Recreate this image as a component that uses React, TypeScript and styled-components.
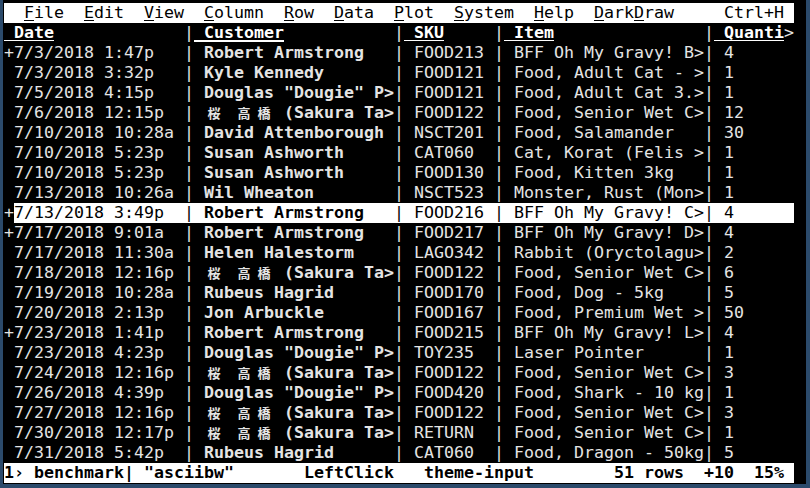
import React from "react";
import styled, { createGlobalStyle, css } from "styled-components";

const CW = 10; // terminal cell width in px
const RH = 20; // terminal row height in px

const GlobalStyle = createGlobalStyle`
  html, body { margin: 0; padding: 0; background: #2b4a6b; }
  #root { width: 810px; height: 488px; }
`;

const Frame = styled.div`
  width: 810px;
  height: 488px;
  box-sizing: border-box;
  background: #2b4a6b;
  padding: 0 4px 4px 3px;
  display: flex;
`;

const Screen = styled.div`
  flex: 1;
  background: #000;
  padding: 3px 0 0 1px;
  display: flex;
  flex-direction: column;
  font-family: "DejaVu Sans Mono", "Liberation Mono", monospace;
  font-size: 16.61px;
  line-height: ${RH}px;
  color: #e4e4e4;
  white-space: pre;
  overflow: hidden;
`;

const Line = styled.div`
  display: flex;
  height: ${RH}px;
  flex: none;
`;

const MenuBar = styled(Line)`
  width: ${79 * CW}px;
  background: #ffffff;
  color: #000;
  padding: 0 ${CW}px 0 ${2 * CW}px;
  box-sizing: border-box;
  gap: ${2 * CW}px;
`;

const MenuItem = styled.span<{ $right?: boolean }>`
  ${(p) => p.$right && css`margin-left: auto;`}
`;

const Hot = styled.span`
  text-decoration: underline;
  text-underline-offset: 2px;
`;

const Cell = styled.span<{ $w: number; $bold?: boolean }>`
  flex: none;
  width: ${(p) => p.$w * CW}px;
  overflow: hidden;
  font-weight: ${(p) => (p.$bold ? 700 : 400)};
`;

const HeadCell = styled.span<{ $w: number; $current?: boolean }>`
  flex: none;
  width: ${(p) => p.$w * CW}px;
  overflow: hidden;
  font-weight: 700;
  color: #ffffff;
  text-decoration: underline;
  text-decoration-thickness: ${(p) => (p.$current ? 2 : 1)}px;
  text-underline-offset: 2px;
`;

const Sep = styled.span`
  flex: none;
  width: ${CW}px;
`;

const RowBody = styled.div<{ $active?: boolean }>`
  display: flex;
  width: ${78 * CW}px;
  background: ${(p) => (p.$active ? "#ffffff" : "transparent")};
  color: ${(p) => (p.$active ? "#000000" : "#e4e4e4")};
`;

const Wide = styled.span`
  display: inline-block;
  width: ${2 * CW}px;
  text-align: center;
  font-family: "Noto Sans CJK JP", "Noto Sans CJK SC", sans-serif;
  font-size: 13px;
  vertical-align: top;
`;

const StatusBar = styled(Line)`
  width: ${79 * CW}px;
  background: #ffffff;
  color: #000;
  font-weight: 700;
`;

type Row = {
  mark?: boolean;
  date: string;
  cust: string;
  sku: string;
  item: string;
  qty: string;
  active?: boolean;
};

const SAKURA = "桜 高橋 (Sakura Ta>";
const DOUG = 'Douglas "Dougie" P>';

const rows: Row[] = [
  { mark: true, date: "7/3/2018 1:47p", cust: "Robert Armstrong", sku: "FOOD213", item: "BFF Oh My Gravy! B>", qty: "4" },
  { date: "7/3/2018 3:32p", cust: "Kyle Kennedy", sku: "FOOD121", item: "Food, Adult Cat - >", qty: "1" },
  { date: "7/5/2018 4:15p", cust: DOUG, sku: "FOOD121", item: "Food, Adult Cat 3.>", qty: "1" },
  { date: "7/6/2018 12:15p", cust: SAKURA, sku: "FOOD122", item: "Food, Senior Wet C>", qty: "12" },
  { date: "7/10/2018 10:28a", cust: "David Attenborough", sku: "NSCT201", item: "Food, Salamander", qty: "30" },
  { date: "7/10/2018 5:23p", cust: "Susan Ashworth", sku: "CAT060", item: "Cat, Korat (Felis >", qty: "1" },
  { date: "7/10/2018 5:23p", cust: "Susan Ashworth", sku: "FOOD130", item: "Food, Kitten 3kg", qty: "1" },
  { date: "7/13/2018 10:26a", cust: "Wil Wheaton", sku: "NSCT523", item: "Monster, Rust (Mon>", qty: "1" },
  { mark: true, active: true, date: "7/13/2018 3:49p", cust: "Robert Armstrong", sku: "FOOD216", item: "BFF Oh My Gravy! C>", qty: "4" },
  { mark: true, date: "7/17/2018 9:01a", cust: "Robert Armstrong", sku: "FOOD217", item: "BFF Oh My Gravy! D>", qty: "4" },
  { date: "7/17/2018 11:30a", cust: "Helen Halestorm", sku: "LAGO342", item: "Rabbit (Oryctolagu>", qty: "2" },
  { date: "7/18/2018 12:16p", cust: SAKURA, sku: "FOOD122", item: "Food, Senior Wet C>", qty: "6" },
  { date: "7/19/2018 10:28a", cust: "Rubeus Hagrid", sku: "FOOD170", item: "Food, Dog - 5kg", qty: "5" },
  { date: "7/20/2018 2:13p", cust: "Jon Arbuckle", sku: "FOOD167", item: "Food, Premium Wet >", qty: "50" },
  { mark: true, date: "7/23/2018 1:41p", cust: "Robert Armstrong", sku: "FOOD215", item: "BFF Oh My Gravy! L>", qty: "4" },
  { date: "7/23/2018 4:23p", cust: DOUG, sku: "TOY235", item: "Laser Pointer", qty: "1" },
  { date: "7/24/2018 12:16p", cust: SAKURA, sku: "FOOD122", item: "Food, Senior Wet C>", qty: "3" },
  { date: "7/26/2018 4:39p", cust: DOUG, sku: "FOOD420", item: "Food, Shark - 10 kg", qty: "1" },
  { date: "7/27/2018 12:16p", cust: SAKURA, sku: "FOOD122", item: "Food, Senior Wet C>", qty: "3" },
  { date: "7/30/2018 12:17p", cust: SAKURA, sku: "RETURN", item: "Food, Senior Wet C>", qty: "1" },
  { date: "7/31/2018 5:42p", cust: "Rubeus Hagrid", sku: "CAT060", item: "Food, Dragon - 50kg", qty: "5" },
];

const menus: [string, string][] = [
  ["F", "ile"],
  ["E", "dit"],
  ["V", "iew"],
  ["C", "olumn"],
  ["R", "ow"],
  ["D", "ata"],
  ["P", "lot"],
  ["S", "ystem"],
  ["H", "elp"],
];

function Term({ text }: { text: string }) {
  const parts: React.ReactNode[] = [];
  let buf = "";
  Array.from(text).forEach((ch, i) => {
    if (ch.charCodeAt(0) > 0x2e80) {
      if (buf) parts.push(buf);
      buf = "";
      parts.push(<Wide key={i}>{ch}</Wide>);
    } else {
      buf += ch;
    }
  });
  if (buf) parts.push(buf);
  return <>{parts}</>;
}

export default function App() {
  return (
    <>
      <GlobalStyle />
      <Frame>
        <Screen>
          <MenuBar>
            {menus.map(([h, rest]) => (
              <MenuItem key={h + rest}>
                <Hot>{h}</Hot>
                {rest}
              </MenuItem>
            ))}
            <MenuItem>
              <Hot>D</Hot>ark<Hot>D</Hot>raw
            </MenuItem>
            <MenuItem $right>Ctrl+H</MenuItem>
          </MenuBar>

          <Line>
            <HeadCell $w={18}> Date</HeadCell>
            <Sep>|</Sep>
            <HeadCell $w={20} $current> Customer</HeadCell>
            <Sep>|</Sep>
            <HeadCell $w={9}> SKU</HeadCell>
            <Sep>|</Sep>
            <HeadCell $w={20}> Item</HeadCell>
            <Sep>|</Sep>
            <HeadCell $w={7}> Quanti</HeadCell>
            <Cell $w={1}>&gt;</Cell>
          </Line>

          {rows.map((r, i) => (
            <Line key={i}>
              <Cell $w={1}>{r.mark ? "+" : " "}</Cell>
              <RowBody $active={r.active}>
                <Cell $w={17}>{r.date}</Cell>
                <Sep>|</Sep>
                <Cell $w={20} $bold>
                  {" "}
                  <Term text={r.cust} />
                </Cell>
                <Sep>|</Sep>
                <Cell $w={9}> {r.sku}</Cell>
                <Sep>|</Sep>
                <Cell $w={20}> {r.item}</Cell>
                <Sep>|</Sep>
                <Cell $w={8}> {r.qty}</Cell>
              </RowBody>
            </Line>
          ))}

          <StatusBar>
            <Cell $w={30} $bold>1› benchmark| "asciibw"</Cell>
            <Cell $w={12} $bold>LeftClick</Cell>
            <Cell $w={19} $bold>theme-input</Cell>
            <Cell $w={9} $bold>51 rows</Cell>
            <Cell $w={5} $bold>+10</Cell>
            <Cell $w={4} $bold>15%</Cell>
          </StatusBar>
        </Screen>
      </Frame>
    </>
  );
}
